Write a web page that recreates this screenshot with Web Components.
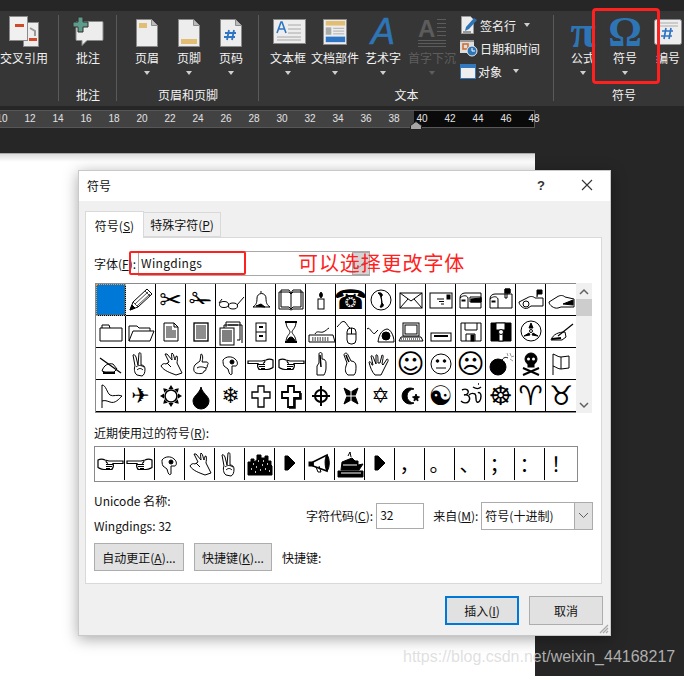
<!DOCTYPE html>
<html lang="zh">
<head>
<meta charset="utf-8">
<title>符号</title>
<style>
  html, body { margin: 0; height: 100%; }
  body { width: 684px; height: 676px; overflow: hidden; background: #262626; font: 12px "Noto Sans CJK SC", "Liberation Sans", sans-serif; }
</style>
</head>
<body>
<word-screen></word-screen>

<script>
(function () {

  const PAGE = (body) => `<svg width="24" height="30" viewBox="0 0 24 30"><path d="M1.500 2.500h15l6 6v21h-21z" fill="#ededed" stroke="#8a8a8a"/><path d="M16.500 2.500v6h6" fill="#bbb" stroke="#8a8a8a"/>${body}</svg>`;

  const ICONS = {
    crossref: `<svg width="30" height="32" viewBox="0 0 30 32"><rect x="14.500" y="6.500" width="15" height="24" fill="#ededed" stroke="#888"/><rect x="20" y="22" width="8" height="3" fill="#d0492a"/><path d="M21 12l5 3 0 5" fill="none" stroke="#999" stroke-width="2"/><rect x=".5" y=".5" width="18" height="24" fill="#f0f0f0" stroke="#8a8a8a"/><rect x="6" y="8" width="9" height="3" fill="#d0492a"/></svg>`,
    comment: `<svg width="32" height="32" viewBox="0 0 32 32"><path d="M5 5.500h25a1 1 0 0 1 1 1v17a1 1 0 0 1-1 1H15l-5 5v-5H5a1 1 0 0 1-1-1v-17a1 1 0 0 1 1-1z" fill="#ededed" stroke="#8a8a8a"/><path d="M6 1h5v5h5v5h-5v5H6v-5H1V6h5z" fill="#5d9b8a" stroke="#2e2e2e"/></svg>`,
    header: PAGE('<rect x="4" y="6" width="8" height="5" fill="#e2bd74"/>'),
    footer: PAGE('<rect x="4" y="22" width="16" height="5" fill="#e2bd74"/>'),
    pagenum: PAGE('<path d="M10 13l-2 10M15 13l-2 10M6 16h11M5 20h11" stroke="#2e75c6" stroke-width="1.800" fill="none"/>'),
    textbox: `<svg width="34" height="26" viewBox="0 0 34 26" style="margin-left:3px"><rect x=".5" y=".5" width="32" height="24" fill="#ededed" stroke="#8a8a8a"/><path d="M4 14l4-11h1l4 11M5.500 10h6" fill="none" stroke="#2e75c6" stroke-width="1.600"/><path d="M15 6h13M15 10h13M15 14h13M4 18h24M4 21h24" stroke="#a8a8a8"/></svg>`,
    docparts: `<svg width="24" height="28" viewBox="0 0 26 28"><rect x=".5" y=".5" width="25" height="27" fill="#ededed" stroke="#8a8a8a"/><rect x="3" y="2" width="21" height="5" fill="#e2bd74"/><rect x="3" y="9" width="6" height="8" fill="#aaa"/><path d="M11 10h12M11 13h12M11 16h12" stroke="#aaa"/><rect x="3" y="19" width="21" height="6" fill="#2e75c6"/></svg>`,
    sign: `<svg width="18" height="18" viewBox="0 0 18 18"><path d="M1.500.5h9l3 3v14h-12z" fill="#ededed" stroke="#999"/><path d="M5 15l1-4 8-9 3 2-8 9z" fill="#2e75b6"/><path d="M3 16h8" stroke="#444"/></svg>`,
    date: `<svg width="18" height="18" viewBox="0 0 18 18"><rect x="0" y="1" width="14" height="13" fill="#ddd"/><path d="M0 1h14v2H0z" fill="#999"/><rect x="3" y="5" width="5" height="5" fill="none" stroke="#d0692a" stroke-width="1.500"/><circle cx="12" cy="12" r="5" fill="#2e75b6" stroke="#eee"/><path d="M12 9v3h3" fill="none" stroke="#fff"/></svg>`,
    object: `<svg width="16" height="15" viewBox="0 0 16 15"><rect width="16" height="15" fill="#3478bd"/><rect x="1" y="4" width="14" height="10" fill="#efefef"/></svg>`
  };

  const ribbonTemplate = document.createElement('template');
  ribbonTemplate.innerHTML = `
  <style>
    :host { display: flex; height: 95px; margin-top: 11px; background: #363636; color: #f2f2f2; overflow: hidden; }
  </style>
  <slot></slot>
  `;

  class WordRibbon extends HTMLElement {
    constructor() {
      super();
      this.attachShadow({ mode: 'open' });
      this.shadowRoot.appendChild(ribbonTemplate.content.cloneNode(true));
    }
  }

  const groupTemplate = document.createElement('template');
  groupTemplate.innerHTML = `
  <style>
    :host { display: block; box-sizing: border-box; flex: none; position: relative; height: 95px; }
    .line { position: absolute; right: 0; top: 4px; width: 1px; height: 86px; background: #5a5a5a; }
    .items { display: flex; height: 70px; }
    .name { position: absolute; left: 0; right: 0; bottom: 3px; text-align: center; line-height: 16px; }
    :host([noline]) .line { display: none; }
  </style>
  <div class="items"><slot></slot></div>
  <div class="name" id="name"></div>
  <div class="line"></div>
  `;

  class RibbonGroup extends HTMLElement {
    constructor() {
      super();
      this.attachShadow({ mode: 'open' });
      this.shadowRoot.appendChild(groupTemplate.content.cloneNode(true));
    }
    connectedCallback() {
      this.shadowRoot.querySelector('#name').textContent = this.getAttribute('name') || '';
    }
  }

  const buttonTemplate = document.createElement('template');
  buttonTemplate.innerHTML = `
  <style>
    :host { display: block; flex: none; color: #f2f2f2; }
    .box { display: flex; flex-direction: column; align-items: center; height: 70px; }
    .icon { height: 30px; margin-top: 6px; display: flex; align-items: center; justify-content: center; }
    .label { margin-top: 2px; line-height: 18px; white-space: nowrap; }
    .arrow { width: 0; height: 0; margin-top: 4px; border: 3px solid transparent; border-top: 4px solid #cfcfcf; }
    :host([off]) .label { color: #5e5e5e; }
    :host([off]) .arrow { border-top-color: #5e5e5e; }
    :host([plain]) .arrow { display: none; }
  </style>
  <div class="box">
    <div class="icon"><slot></slot></div>
    <div class="label" id="label"></div>
    <div class="arrow"></div>
  </div>
  `;

  class RibbonButton extends HTMLElement {
    constructor() {
      super();
      this.attachShadow({ mode: 'open' });
      this.shadowRoot.appendChild(buttonTemplate.content.cloneNode(true));
    }
    connectedCallback() {
      this.shadowRoot.querySelector('#label').textContent = this.getAttribute('label');
      const name = this.getAttribute('icon');
      if (name) this.innerHTML = ICONS[name];
    }
  }

  const rulerTemplate = document.createElement('template');
  rulerTemplate.innerHTML = `
  <style>
    :host { display: flex; position: relative; width: 535px; height: 18px; margin-top: 4px; box-sizing: border-box; border: 1px solid #575757; border-left: 0; background: #0a0a0a; font: 10px "Liberation Sans", sans-serif; color: #e2e2e2; }
    .run { display: flex; flex: none; height: 16px; line-height: 16px; }
    .gray { width: 414px; background: #424242; overflow: hidden; }
    .dark { flex: 1; }
    span { flex: none; width: 28px; text-align: center; }
    .marker { position: absolute; left: 410px; top: 10px; }
  </style>
  <div class="run gray" id="gray"></div>
  <div class="run dark" id="dark"></div>
  <svg class="marker" width="12" height="9" viewBox="0 0 12 9"><path d="M.5 8.500V4.500L6 .5l5.500 4v4z" fill="#a6a6a6" stroke="#222"/></svg>
  `;

  class WordRuler extends HTMLElement {
    constructor() {
      super();
      this.attachShadow({ mode: 'open' });
      this.shadowRoot.appendChild(rulerTemplate.content.cloneNode(true));
    }
    connectedCallback() {
      const gray = this.shadowRoot.querySelector('#gray');
      const dark = this.shadowRoot.querySelector('#dark');
      for (let n = 10; n <= 38; n += 2) {
        const s = document.createElement('span');
        s.textContent = n;
        gray.appendChild(s);
      }
      gray.firstChild.style.marginLeft = '-12px';
      for (let n = 40; n <= 48; n += 2) {
        const s = document.createElement('span');
        s.textContent = n;
        dark.appendChild(s);
      }
      dark.firstChild.style.marginLeft = '-6px';
    }
  }

  const S = (body) => `<svg width="28" height="30" viewBox="0 0 28 30" fill="none" stroke="#000" stroke-width="1">${body}</svg>`;
  const HAND = '<path d="M2 11c2-1 5-1 7 0l4 1h14v2.500H17c1 2 0 6-2 6H8c-3 0-4-1-6-2z" stroke-width="1.200"/><path d="M10 15.500h7M10 17.500h6M10 19.500h4M10 12c0 1 1 2 2 2.500" stroke-width="1.100"/>';
  const RAYS = [0, 45, 90, 135, 180, 225, 270, 315].map((a) => `<path d="M14 4l2.500 4h-5z" fill="#000" stroke="none" transform="rotate(${a} 14 15)"/>`).join('');
  const SVG = {
    pencil: S('<path d="M3 25l3-8L20 4l5 5-14 13z"/><path d="M6 17l5 5M18 6l5 5M8 19L21 7M10 21L23 9" stroke-width=".700"/><path d="M3 25l2-5 3 3z" fill="#000"/>'),
    glasses: S('<ellipse cx="7" cy="19.500" rx="4.500" ry="3"/><ellipse cx="16" cy="21" rx="4.500" ry="3"/><path d="M11 19l1 .5M20 20l7-8M2 18l3-4"/>'),
    bell: S('<path d="M6 22c3-2 4-4 4-9a4.500 4.500 0 0 1 9 0c0 5 1 7 4 9z"/><path d="M9 21l5-2 4 3z" fill="#000"/><path d="M14 8V6"/>'),
    book: S('<path d="M2 7h10l2 2 2-2h10v17H16l-2 1-2-1H2z"/><path d="M4 5h8l2 3 2-3h8v17h-8l-2 2-2-2H4zM14 8v16"/>'),
    candle: S('<rect x="11" y="14" width="6" height="10"/><path d="M14 7c-2 2-2 4 0 6 2-2 2-4 0-6z" fill="#000"/>'),
    circlephone: S('<circle cx="14" cy="15" r="10"/><path d="M11 8c4-1 5 2 4 3l-1 1 1 6 1 1c1 1 0 4-3 3 3-4 2-11-2-14z" fill="#000"/>'),
    mail: S('<rect x="3" y="8" width="22" height="15"/><path d="M3 8l11 8 11-8M3 23l8-9M25 23l-8-9"/>'),
    mail2: S('<rect x="3" y="8" width="22" height="15"/><rect x="20" y="10" width="3" height="4" fill="#000"/><path d="M10 14h7M12 16.500h5M14 19h3"/>'),
    box1: S('<path d="M3 13c0-3 2-5 5-5h16v15H3zM3 13c3-3 7-3 8 0v10M13 12h11v5H13z"/><rect x="5" y="15" width="3" height="1" fill="#000"/><path d="M14 14l10-1v4H14z" fill="#000"/>'),
    box2: S('<path d="M3 14c0-3 2-5 5-5h17v14H3zM3 14c3-3 7-3 8 0v9M18 9V4h5v4h-3v5h-2z"/><path d="M18 4h5v4h-5z" fill="#000"/><rect x="5" y="16" width="3" height="1" fill="#000"/>'),
    box3: S('<path d="M2 17l8-4c3-2 6-2 8 0h8v8H14l-3 2c-4 2-9-3-9-6z"/><circle cx="9" cy="19" r="3"/><path d="M20 12V5h5v4h-4" fill="#000"/>'),
    box4: S('<path d="M2 17l8-5c3-2 6-2 8 0l9 2v8H14l-3 1c-4 1-9-3-9-6z"/><path d="M16 19l10-4v5z" fill="#000"/>'),
    folder: S('<path d="M3 11h22v13H3zM5 11V8h7l1 3"/>'),
    folderopen: S('<path d="M2 24V9h8l2 2h11v3M2 24l4-10h21l-4 10z"/>'),
    doc: S('<path d="M7 6h10l4 4v14H7zM17 6v4h4"/><path d="M9 10h6M9 12h6M9 14h10M9 16h10M9 18h10M9 20h10" stroke-width=".900"/>'),
    doclines: S('<rect x="7" y="6" width="14" height="18" stroke-width="1.300"/><path d="M9 9h10M9 11h10M9 13h10M9 15h10M9 17h10M9 19h10M9 21h10" stroke-width=".900"/>'),
    docs: S('<path d="M9 10V5h14v18h-3M11 8h14v18M7 12V8h14"/><rect x="3" y="11" width="14" height="17" fill="#fff"/><path d="M5 14h10M5 16h10M5 18h10M5 20h10M5 22h10M5 24h10"/>'),
    cabinet: S('<rect x="9" y="6" width="10" height="18"/><path d="M9 15h10"/><path d="M12 10h4M12 19h4" stroke-width="2"/>'),
    hourglass: S('<path d="M8 5h12M8 25h12" stroke-width="2"/><path d="M9 5c0 6 4 8 4 10s-4 4-4 10h10c0-6-4-8-4-10s4-4 4-10z"/><path d="M10 24c1-3 3-4 4-4s3 1 4 4z" fill="#000"/>'),
    keyboard: S('<path d="M2 18h24l2 7H2zM8 17c2-4 5-1 8-2s4-3 6-4"/><path d="M5 21h17M5 23h17" stroke-dasharray="1.500 1"/>'),
    mouse: S('<path d="M0 10c3-3 5-7 8-5 2 2 3 5 5 6"/><rect x="10" y="11" width="9" height="16" rx="4"/><path d="M10 17h9M14.500 11v6"/>'),
    trackball: S('<path d="M0 12c3-4 6 9 9 3l2-2"/><path d="M11 25c1-8 4-12 9-13 3 0 7 6 7 13z"/><circle cx="19" cy="19" r="4" fill="#000"/>'),
    laptop: S('<rect x="6" y="6" width="16" height="13"/><rect x="8" y="8" width="12" height="9" fill="#fff"/><path d="M4 20h20l2 4H2z"/><path d="M4 22h20" stroke-dasharray="1 1"/>'),
    drive: S('<rect x="4" y="16" width="20" height="8"/><path d="M7 19h14" stroke-width="2"/>'),
    floppy: S('<path d="M4 6h20v18H4z"/><path d="M8 6v7h12V6M9 24v-7h9v7"/><rect x="14" y="18" width="3" height="6" fill="#000"/>'),
    floppy2: S('<path d="M4 6h20v18H4z" fill="#000"/><rect x="9" y="6" width="9" height="7" fill="#fff"/><rect x="12" y="14" width="4" height="10" fill="#fff"/><circle cx="14" cy="15" r="2.500" fill="#fff"/>'),
    tape: S('<circle cx="14" cy="14" r="10"/><circle cx="14" cy="14" r="1.500"/><path d="M14 6l-2 5h4zM7 19l5-3 1 2zM21 19l-5-3-1 2z" fill="#000"/>'),
    writing: S('<path d="M4 23c2-6 8-8 14-8l1 5-4 3z"/><path d="M11 19l15-12" stroke-width="1.300"/><path d="M5 22l9-1" stroke-width="2"/>'),
    writing2: S('<path d="M5 22c2-6 6-8 11-7l4 5-3 3H8z"/><path d="M3 9l21 15" stroke-width="1.300"/><path d="M6 24h12" stroke-width="2"/>'),
    victory: S('<path d="M10 26c-3-2-3-7-2-9L6 6c1-1 2 0 3 2l2 8 1-12c2-1 2 1 2 3v9c2 0 4 1 4 4 0 4-1 6-3 7z"/><path d="M9 18c2-2 5-2 8 0M10 21c2-2 4-2 6 0"/>'),
    thumbup: S('<path d="M9 24c-3-1-3-7 0-9l4-3 1-7c2 0 2 5 1 8h5c2 1 1 3 0 3 1 1 0 3-1 3 0 2 0 3-2 3 0 3-5 3-8 2z"/><path d="M10 19c3-2 6-1 9 0"/>'),
    thumbdown: S('<path d="M6 11c3-4 9-4 12-1 3 2 3 6 1 7l-4 0 0 8c-2 2-3-1-4-5l-4-3c-1-2-1-4-1-6z"/><circle cx="15" cy="13" r="2" fill="#000"/>'),
    ok: S('<path d="M19 26c-5-2-12-4-15-9 1-2 3-3 5-2l3-2-4-8 2 0 5 6c0-2-1-6 0-7 2 1 2 5 3 7 1-2 0-4 2-4 1 3 0 5 0 7l5 10z"/><path d="M10 14l4 4"/>'),
    handright: S(HAND),
    handleft: S(`<g transform="translate(28 0) scale(-1 1)">${HAND}</g>`),
    handup: S('<path d="M10 26v-9l2-3V5c0-2 3-2 3 0v5c3 0 4 2 4 4v5c0 3-1 5-2 7z"/><path d="M13 6l1 12" stroke-width="1.500"/>'),
    fingertip: S('<path d="M11 26c-3-2-3-6-2-9l1-3-3-8c0-2 3-3 4 0l3 6c3 0 5 2 5 5 0 4 0 7-2 9z"/><path d="M9 6c1 3 2 5 3 7" stroke-width="1.500"/>'),
    handopen: S('<path d="M8 26c-3-3-5-8-6-13 1-1 2 0 3 3l1 0-2-9c1-1 2 0 3 3l2 5 0-9c2-1 2 2 2 8l2 0 2-8c2 0 1 3 0 9l1 1 4-6c1 0 2 1 0 4l-3 6-3 6z"/>'),
    neutral: S('<circle cx="14" cy="15" r="10"/><circle cx="10.500" cy="12" r="1.300" fill="#000"/><circle cx="17.500" cy="12" r="1.300" fill="#000"/><path d="M9 19h10"/>'),
    bomb: S('<circle cx="11" cy="18" r="8" fill="#000"/><path d="M15 11c2-3 4-3 6-2"/><path d="M23 4l1 3M27 7l-3 1M26 12l-3-2M20 4l1 3" stroke="#999"/>'),
    skull: S('<circle cx="14" cy="10" r="6" fill="#000"/><rect x="11" y="14" width="6" height="4" fill="#000"/><circle cx="11.500" cy="10" r="1.500" fill="#fff" stroke="none"/><circle cx="16.500" cy="10" r="1.500" fill="#fff" stroke="none"/><path d="M6 19l16 7M22 19L6 26" stroke-width="2"/>'),
    flag1: S('<path d="M6 26V5M6 5c3 1 5 3 8 3s5-1 8-1v12c-3 0-5 1-8 1s-5-2-8-3M14 8v12"/>'),
    flag2: S('<path d="M5 27V4c4 0 5 8 8 10s8-1 12 1c-3 3-7 8-12 6-3-1-5-2-8-1"/>'),
    sun: S(`<circle cx="14" cy="15" r="6" stroke-width="1.600"/>${RAYS}`),
    drop: S('<path d="M14 6c1 6 8 9 8 14a8 8 0 0 1-16 0c0-5 7-8 8-14z" fill="#000"/>'),
    cross1: S('<path d="M11 5h6v6h6v6h-6v9h-6v-9H5v-6h6z" stroke-width="1.300"/>'),
    cross2: S('<path d="M11 5h6v6h6v6h-6v9h-6v-9H5v-6h6z" stroke-width="1.800"/><path d="M24 12v6h-6v9h-6" stroke-width="1.500"/>'),
    cross3: S('<circle cx="14" cy="15" r="6" stroke-width="2"/><path d="M14 5v20M5 15h18" stroke-width="2"/>'),
    maltese: S('<path d="M7 7l7 4 7-4-3 8 3 8-7-4-7 4 3-8z" fill="#000"/><path d="M14 8v14M7 15h14" stroke="#fff"/>'),
    crescent: S('<path d="M17 8a8 8 0 1 0 0 14 6.500 6.500 0 1 1 0-14z" fill="#000"/><path d="M19 13l1 2.500 2.500.5-2 1.500.5 2.500-2-1.500-2 1.500.5-2.500-2-1.500 2.500-.5z" fill="#000"/>'),
    om: S('<path d="M5 9c4-2 7 0 6 3 -1 2-3 2-4 2 4-1 7 2 5 6-2 3-6 2-8 0M12 14c2-2 4-2 6-1 2 2 0 7 2 8s4-2 4-6c0-3-2-4-3-3M16 6c3 2 6 2 8 0M21 3h1" stroke-width="1.400"/>'),
    city: S('<path d="M2 26V13h3v-3h3v3l3-2V6h4v3h4V7h3v5h3v4l1 1v9z" fill="#000"/><path d="M7 15h1M12 12h1M17 12h1M21 15h1M5 20h1M10 18h1M14 21h1M19 20h1M23 22h1M9 23h1M16 16h1" stroke="#fff" stroke-width="1.500"/>'),
    tri: S('<path d="M9 7h3l7 7-7 7H9z" fill="#000"/>'),
    megaphone: S('<path d="M7 13l14-7v16L7 17z" fill="#fff" stroke-width="1.600"/><path d="M21 6c3 3 3 13 0 16-2-2-3-13 0-16z" fill="#000"/><rect x="3" y="13" width="4" height="4" fill="#000"/><path d="M10 18l2 5h3l-2-6"/>'),
    ship: S('<path d="M2 22h25v6H2z" fill="#000"/><path d="M5 21l1-8 10-4 3 3 3 0 0 4 5-1-4 6z" fill="#000"/><path d="M12 7l2-4 1 5" stroke="#000"/><path d="M5 24h20M7 16h14" stroke="#fff"/>')
  };

  const GLYPHS = [
    '', '@pencil', '✂', '✁', '@glasses', '@bell', '@book', '@candle', '☎', '@circlephone', '@mail', '@mail2', '@box1', '@box2', '@box3', '@box4',
    '@folder', '@folderopen', '@doc', '@doclines', '@docs', '@cabinet', '@hourglass', '@keyboard', '@mouse', '@trackball', '@laptop', '@drive', '@floppy', '@floppy2', '@tape', '@writing',
    '@writing2', '@victory', '@ok', '@thumbup', '@thumbdown', '@handleft', '@handright', '@handup', '@fingertip', '@handopen', '☺', '@neutral', '☹', '@bomb', '@skull', '@flag1',
    '@flag2', '✈', '@sun', '@drop', '❄', '@cross1', '@cross2', '@cross3', '@maltese', '✡', '@crescent', '☯', '@om', '☸', '♈', '♉'
  ];
  const BIG = '✂✁☎☺☹☯☸♈♉';
  const RECENT = ['@handright', '@handleft', '@thumbdown', '@ok', '@victory', '@city', '@tri', '@megaphone', '@ship', '@tri', '，', '。', '、', '；', '：', '！'];

  const cellTemplate = document.createElement('template');
  cellTemplate.innerHTML = `
  <style>
    :host { display: flex; box-sizing: border-box; align-items: center; justify-content: center; overflow: hidden; font: 22px/1 "DejaVu Sans", sans-serif; color: #000; }
    :host([cjk]) { font: 20px/1 "Noto Sans CJK SC", sans-serif; }
    :host([big]) { font-size: 27px; }
    svg { display: block; flex: none; }
    #out { display: block; }
  </style>
  <span id="out"></span>
  `;

  class SymCell extends HTMLElement {
    constructor() {
      super();
      this.attachShadow({ mode: 'open' });
      this.shadowRoot.appendChild(cellTemplate.content.cloneNode(true));
    }
    set glyph(value) {
      const out = this.shadowRoot.querySelector('#out');
      if (value.charAt(0) === '@') {
        out.innerHTML = SVG[value.slice(1)];
      } else {
        out.textContent = value;
      }
    }
  }

  const gridTemplate = document.createElement('template');
  gridTemplate.innerHTML = `
  <style>
    :host { display: flex; margin-top: 7px; width: 498px; height: 130px; }
    .grid { display: grid; grid-template-columns: repeat(16, 30px); grid-auto-rows: 32px; margin-left: 1px; width: 481px; height: 130px; box-sizing: border-box; border-top: 1px solid #8a8a8a; border-left: 1px solid #8a8a8a; border-bottom: 1px solid #8a8a8a; background: #fff; }
    sym-cell { border-right: 1px solid #000; border-bottom: 1px solid #000; }
    sym-cell.sel { background: #0078d7; outline: 1px dotted #ff9a2e; outline-offset: -1px; }
    sym-cell.last { border-right: 0; }
    .bar { width: 16px; background: #f0f0f0; display: flex; flex-direction: column; align-items: center; }
    .bar .end { height: 16px; display: flex; align-items: center; justify-content: center; }
    .bar .thumb { width: 16px; height: 17px; background: #cdcdcd; }
    .bar .fill { flex: 1; }
  </style>
  <div class="grid" id="grid"></div>
  <div class="bar">
    <div class="end"><svg width="10" height="7" viewBox="0 0 10 7"><path d="M1 6l4-4 4 4" fill="none" stroke="#606060" stroke-width="1.500"/></svg></div>
    <div class="thumb"></div>
    <div class="fill"></div>
    <div class="end"><svg width="10" height="7" viewBox="0 0 10 7"><path d="M1 1l4 4 4-4" fill="none" stroke="#606060" stroke-width="1.500"/></svg></div>
  </div>
  `;

  class SymbolGrid extends HTMLElement {
    constructor() {
      super();
      this.attachShadow({ mode: 'open' });
      this.shadowRoot.appendChild(gridTemplate.content.cloneNode(true));
    }
    connectedCallback() {
      const grid = this.shadowRoot.querySelector('#grid');
      GLYPHS.forEach((g, i) => {
        const c = document.createElement('sym-cell');
        if (i === 0) c.className = 'sel';
        if (i % 16 === 15) c.classList.add('last');
        if (g && BIG.indexOf(g) >= 0) c.setAttribute('big', '');
        grid.appendChild(c);
        c.glyph = g;
      });
    }
  }

  const recentTemplate = document.createElement('template');
  recentTemplate.innerHTML = `
  <style>
    :host { display: flex; box-sizing: border-box; width: 484px; height: 36px; margin-top: 6px; border: 1px solid #8a8a8a; background: #fff; padding: 1px 0; }
    sym-cell { flex: none; width: 30px; height: 32px; border-right: 1px solid #000; }
    sym-cell:last-child { border-right: 0; width: 32px; }
  </style>
  `;

  class RecentSymbols extends HTMLElement {
    constructor() {
      super();
      this.attachShadow({ mode: 'open' });
      this.shadowRoot.appendChild(recentTemplate.content.cloneNode(true));
    }
    connectedCallback() {
      RECENT.forEach((g) => {
        const c = document.createElement('sym-cell');
        if (g.charCodeAt(0) > 0x3000) c.setAttribute('cjk', '');
        this.shadowRoot.appendChild(c);
        c.glyph = g;
      });
    }
  }

  const dlgButtonTemplate = document.createElement('template');
  dlgButtonTemplate.innerHTML = `
  <style>
    :host { display: inline-flex; box-sizing: border-box; align-items: center; justify-content: center; flex: none; height: 28px; background: #e1e1e1; border: 1px solid #adadad; color: #111; white-space: nowrap; }
    :host([primary]) { border: 2px solid #0078d7; }
  </style>
  <slot></slot>
  `;

  class DlgButton extends HTMLElement {
    constructor() {
      super();
      this.attachShadow({ mode: 'open' });
      this.shadowRoot.appendChild(dlgButtonTemplate.content.cloneNode(true));
    }
  }

  const dialogTemplate = document.createElement('template');
  dialogTemplate.innerHTML = `
  <style>
    :host { display: block; position: absolute; left: 78px; top: 170px; width: 533px; height: 466px; box-sizing: border-box; border: 1px solid #c9c9c9; background: #f0f0f0; color: #111; font: 12px "Noto Sans CJK SC", "Liberation Sans", sans-serif; box-shadow: 0 3px 14px rgba(0,0,0,.35); }
    u { text-decoration-thickness: 1px; text-underline-offset: 1px; }
    .title { display: flex; align-items: center; box-sizing: border-box; height: 30px; padding: 0 0 2px 8px; background: #fff; }
    .title .t { flex: 1; }
    .title .help { width: 46px; font-size: 13px; font-family: "Liberation Sans", sans-serif; font-weight: bold; text-align: center; color: #333; }
    .title .close { display: flex; justify-content: center; width: 46px; }
    .tabs { display: flex; margin: 10px 0 0 6px; height: 26px; position: relative; z-index: 1; }
    .tab { box-sizing: border-box; border: 1px solid #d9d9d9; border-bottom: 0; display: flex; align-items: center; justify-content: center; }
    .tab.on { width: 59px; background: #fff; height: 27px; }
    .tab.off { width: 78px; margin-left: -1px; margin-top: 1px; height: 25px; background: #f0f0f0; border-bottom: 1px solid #d9d9d9; }
    .panel { box-sizing: border-box; margin-left: 6px; width: 517px; height: 347px; background: #fff; border: 1px solid #d9d9d9; padding: 13px 8px 0; }
    .fontrow { display: flex; height: 25px; align-items: center; position: relative; }
    .fontrow .lbl { width: 44px; flex: none; }
    .combo { flex: none; display: flex; align-items: stretch; box-sizing: border-box; width: 232px; height: 25px; border: 1px solid #a8a8a8; border-right: 0; }
    .combo .v { flex: 1; padding-left: 2px; line-height: 21px; letter-spacing: .35px; }
    .combo .b { width: 18px; box-sizing: border-box; background: #d4d4d4; border: 1px solid #ababab; display: flex; align-items: center; justify-content: center; }
    .hint { position: absolute; left: 204px; top: -1px; font-size: 20px; line-height: 26px; color: #ff2020; letter-spacing: .9px; white-space: nowrap; }
    .mark { position: absolute; left: 35px; top: 0; width: 117px; height: 24px; box-sizing: border-box; border: 2px solid #ff2020; border-radius: 2px; }
    .recentlabel { margin-top: 13px; line-height: 14px; }
    .info { display: flex; margin-top: 10px; height: 50px; }
    .info .left { width: 212px; flex: none; display: flex; flex-direction: column; gap: 8px; }
    .info .left div { line-height: 17px; white-space: nowrap; }
    .info .right { display: flex; align-items: center; height: 47px; white-space: nowrap; }
    .field { box-sizing: border-box; flex: none; width: 48px; height: 26px; margin: 0 9px 0 3px; border: 1px solid #ababab; background: #fff; padding: 0 3px; line-height: 22px; }
    .select { display: flex; flex: none; box-sizing: border-box; width: 112px; height: 28px; margin-left: 3px; border: 1px solid #ababab; background: #fff; }
    .select .v { flex: 1; padding-left: 3px; line-height: 26px; }
    .select .b { width: 17px; background: #e1e1e1; border-left: 1px solid #ababab; display: flex; align-items: center; justify-content: center; }
    .actions { display: flex; align-items: center; margin-top: 1px; height: 28px; }
    .foot { display: flex; justify-content: flex-end; gap: 10px; margin: 12px 7px 0 0; }
    .grip { position: absolute; right: 1px; bottom: 1px; }
  </style>
  <div class="title">
    <div class="t">符号</div>
    <div class="help">?</div>
    <div class="close"><svg width="12" height="12" viewBox="0 0 12 12"><path d="M1 1l10 10M11 1L1 11" stroke="#333" stroke-width="1.100"/></svg></div>
  </div>
  <div class="tabs">
    <div class="tab on">符号(<u>S</u>)</div>
    <div class="tab off">特殊字符(<u>P</u>)</div>
  </div>
  <div class="panel">
    <div class="fontrow">
      <div class="lbl">字体(<u>F</u>):</div>
      <div class="combo">
        <div class="v">Wingdings</div>
        <div class="b"><svg width="10" height="8" viewBox="0 0 10 8"><path d="M1 6l3 1 5-6" fill="none" stroke="#888"/></svg></div>
      </div>
      <div class="mark"></div>
      <div class="hint">可以选择更改字体</div>
    </div>
    <symbol-grid></symbol-grid>
    <div class="recentlabel">近期使用过的符号(<u>R</u>):</div>
    <recent-symbols></recent-symbols>
    <div class="info">
      <div class="left">
        <div>Unicode 名称:</div>
        <div>Wingdings: 32</div>
      </div>
      <div class="right">
        <div>字符代码(<u>C</u>):</div>
        <div class="field">32</div>
        <div>来自(<u>M</u>):</div>
        <div class="select">
          <div class="v">符号(十进制)</div>
          <div class="b"><svg width="11" height="7" viewBox="0 0 11 7"><path d="M1 1l4.500 4.500L10 1" fill="none" stroke="#606060"/></svg></div>
        </div>
      </div>
    </div>
    <div class="actions">
      <dlg-button style="width:90px">自动更正(<u>A</u>)...</dlg-button>
      <dlg-button style="width:78px;margin-left:10px">快捷键(<u>K</u>)...</dlg-button>
      <div style="margin-left:10px">快捷键:</div>
    </div>
  </div>
  <div class="foot">
    <dlg-button primary style="width:74px;height:29px">插入(<u>I</u>)</dlg-button>
    <dlg-button style="width:74px;height:29px">取消</dlg-button>
  </div>
  <svg class="grip" width="11" height="11" viewBox="0 0 11 11"><path d="M10 2L2 10M10 5l-5 5M10 8l-2 2" stroke="#a8a8a8" stroke-width="1.200"/></svg>
  `;

  class SymbolDialog extends HTMLElement {
    constructor() {
      super();
      this.attachShadow({ mode: 'open' });
      this.shadowRoot.appendChild(dialogTemplate.content.cloneNode(true));
    }
  }

  const screenTemplate = document.createElement('template');
  screenTemplate.innerHTML = `
  <style>
    :host { display: block; position: relative; width: 684px; height: 676px; overflow: hidden; background: #262626; }
    .gap { height: 25px; }
    .page { width: 535px; height: 523px; box-sizing: border-box; background: linear-gradient(#dcdcdc, #fff 8px); border-top: 1px solid #aaa; }
    .callout { position: absolute; left: 592px; top: 8px; width: 68px; height: 76px; box-sizing: border-box; border: 3px solid #ff2020; border-radius: 4px; }
    .mark { position: absolute; left: 403px; top: 648px; font: 16px/18px "Liberation Sans", sans-serif; color: rgba(215,215,215,.78); white-space: nowrap; }
    .omega, .pi { font: bold 42px/30px "Liberation Serif", serif; color: #2e75b6; }
    .pi { font-size: 46px; }
    .art { font: italic 36px/30px "Liberation Sans", sans-serif; color: #2e75b6; -webkit-text-stroke: .5px #2e75b6; }
    .cap { display: block; width: 28px; height: 28px; color: #5c5c5c; margin-top: 2px; }
    .cap span { display: flex; gap: 2px; }
    .cap b { font: bold 24px/20px "Liberation Sans", sans-serif; }
    .cap i { display: block; width: 11px; height: 19px; background: repeating-linear-gradient(#5c5c5c 0 1px, transparent 1px 4px); }
    .cap em { display: block; height: 8px; margin-top: 1px; background: repeating-linear-gradient(#5c5c5c 0 1px, transparent 1px 3px); }
    .minis { display: flex; flex-direction: column; gap: 5px; padding: 5px 0 0 4px; width: 96px; box-sizing: border-box; flex: none; }
    .mini { display: flex; align-items: center; gap: 2px; height: 18px; white-space: nowrap; }
    .mini .a { width: 0; height: 0; margin-left: 6px; border: 3px solid transparent; border-top: 4px solid #cfcfcf; margin-top: 3px; }
  </style>
  <word-ribbon>
    <ribbon-group style="width:59px">
      <ribbon-button label="交叉引用" icon="crossref" plain style="width:48px"></ribbon-button>
    </ribbon-group>
    <ribbon-group name="批注" style="width:58px">
      <ribbon-button label="批注" icon="comment" plain style="width:58px"></ribbon-button>
    </ribbon-group>
    <ribbon-group name="页眉和页脚" style="width:142px;padding-left:9px">
      <ribbon-button label="页眉" icon="header" style="width:42px"></ribbon-button>
      <ribbon-button label="页脚" icon="footer" style="width:42px"></ribbon-button>
      <ribbon-button label="页码" icon="pagenum" style="width:42px"></ribbon-button>
    </ribbon-group>
    <ribbon-group name="文本" style="width:295px;padding-left:5px">
      <ribbon-button label="文本框" icon="textbox" style="width:48px"></ribbon-button>
      <ribbon-button label="文档部件" icon="docparts" style="width:46px"></ribbon-button>
      <ribbon-button label="艺术字" style="width:50px"><span class="art">A</span></ribbon-button>
      <ribbon-button label="首字下沉" off style="width:48px"><span class="cap"><span><b>A</b><i></i></span><em></em></span></ribbon-button>
      <div class="minis">
        <div class="mini" id="sign"><span>签名行</span><span class="a"></span></div>
        <div class="mini" id="date"><span>日期和时间</span></div>
        <div class="mini" id="obj"><span>对象</span><span class="a" style="margin-left:9px"></span></div>
      </div>
    </ribbon-group>
    <ribbon-group name="符号" noline style="width:140px;padding-left:8px">
      <ribbon-button label="公式" style="width:42px"><span class="pi">π</span></ribbon-button>
      <ribbon-button label="符号" style="width:42px"><span class="omega">Ω</span></ribbon-button>
      <ribbon-button label="编号" plain style="width:44px"></ribbon-button>
    </ribbon-group>
  </word-ribbon>
  <word-ruler></word-ruler>
  <div class="gap"></div>
  <div class="page"></div>
  <symbol-dialog></symbol-dialog>
  <div class="callout"></div>
  <div class="mark">https://blog.csdn.net/weixin_44168217</div>
  `;

  class WordScreen extends HTMLElement {
    constructor() {
      super();
      this.attachShadow({ mode: 'open' });
      this.shadowRoot.appendChild(screenTemplate.content.cloneNode(true));
    }
    connectedCallback() {
      const root = this.shadowRoot;
      root.querySelector('#sign').insertAdjacentHTML('afterbegin', ICONS.sign);
      root.querySelector('#date').insertAdjacentHTML('afterbegin', ICONS.date);
      root.querySelector('#obj').insertAdjacentHTML('afterbegin', ICONS.object);
      const buttons = root.querySelectorAll('ribbon-button');
      buttons[buttons.length - 1].innerHTML = '<svg width="28" height="26" viewBox="0 0 28 26"><rect x=".5" y=".5" width="27" height="25" rx="2" fill="#ededed" stroke="#8a8a8a"/><path d="M4 4h20M4 7h20" stroke="#aaa"/><path d="M12 9l-2 11M17 9l-2 11M8 12h11M7 17h11" stroke="#2e75c6" stroke-width="1.700" fill="none"/></svg>';
    }
  }

  customElements.define('sym-cell', SymCell);
  customElements.define('symbol-grid', SymbolGrid);
  customElements.define('recent-symbols', RecentSymbols);
  customElements.define('dlg-button', DlgButton);
  customElements.define('symbol-dialog', SymbolDialog);
  customElements.define('word-ribbon', WordRibbon);
  customElements.define('ribbon-group', RibbonGroup);
  customElements.define('ribbon-button', RibbonButton);
  customElements.define('word-ruler', WordRuler);
  customElements.define('word-screen', WordScreen);

})();
</script>
</body>
</html>
